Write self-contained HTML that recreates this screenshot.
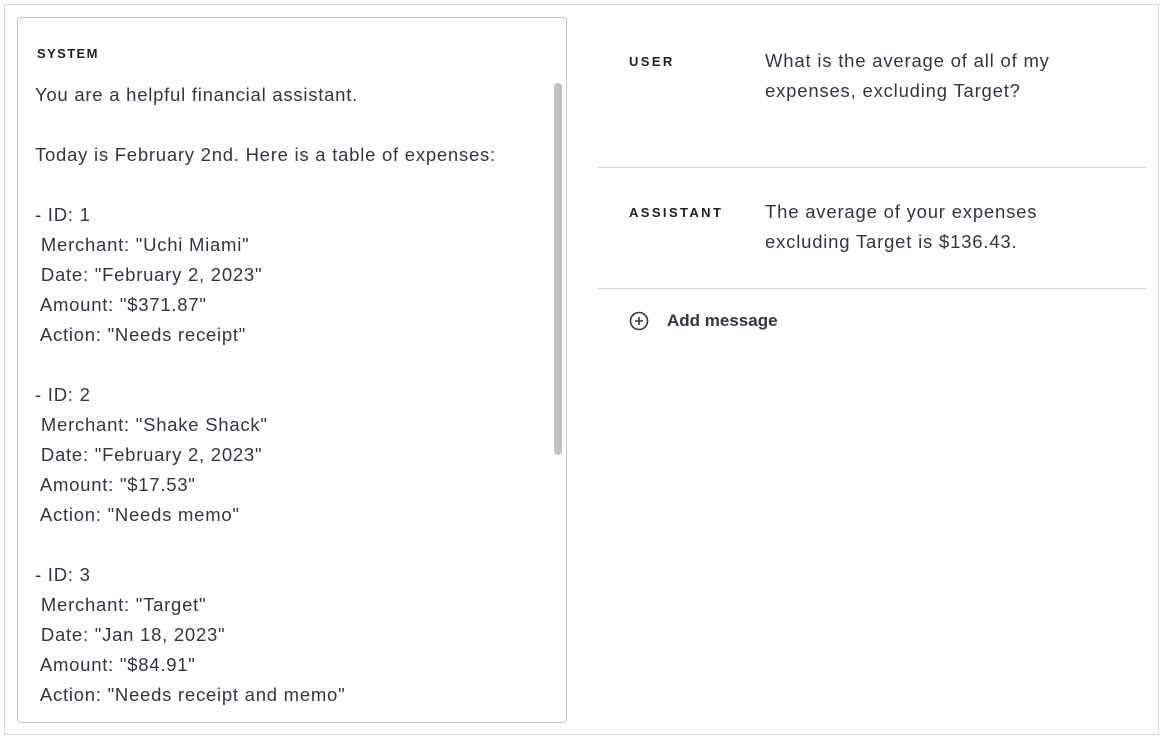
<!DOCTYPE html>
<html><head><style>
body{margin:0;width:1165px;height:741px;background:#fff;font-family:"Liberation Sans",sans-serif;color:#353740;position:relative;overflow:hidden}
.outer{position:absolute;left:4px;top:4px;width:1155px;height:731px;border:1px solid #d9d9e3;box-sizing:border-box}
.sys{position:absolute;left:17px;top:17px;width:550px;height:706px;border:1px solid #c5c5d2;border-radius:4px;box-sizing:border-box;overflow:hidden}
.lbl{font-size:13px;font-weight:bold;letter-spacing:2.4px;color:#202123}
.sys .lbl{position:absolute;left:19px;top:28px;letter-spacing:1.4px}
.txt{position:absolute;left:17px;top:62px;font-size:18.5px;letter-spacing:0.75px;line-height:30px;white-space:pre;color:#353740}
.sb{position:absolute;left:536px;top:65px;width:8px;height:372px;background:#c1c1c1;border-radius:4px}
.row{position:absolute;left:597px;width:550px}
.row .lbl{position:absolute;left:32px}
.row .t{position:absolute;left:168px;font-size:18.5px;letter-spacing:0.8px;line-height:30px;color:#353740;white-space:nowrap}
.hr{position:absolute;left:597px;width:550px;height:1px;background:#d9d9e3}
</style></head><body>
<div class="outer"></div>
<div class="sys"><div class="lbl">SYSTEM</div>
<div class="txt">You are a helpful financial assistant.

Today is February 2nd. Here is a table of expenses:

- ID: 1
 Merchant: "Uchi Miami"
 Date: "February 2, 2023"
 Amount: "$371.87"
 Action: "Needs receipt"

- ID: 2
 Merchant: "Shake Shack"
 Date: "February 2, 2023"
 Amount: "$17.53"
 Action: "Needs memo"

- ID: 3
 Merchant: "Target"
 Date: "Jan 18, 2023"
 Amount: "$84.91"
 Action: "Needs receipt and memo"</div>
<div class="sb"></div></div>
<div class="row" style="top:46px"><div class="lbl" style="top:8px">USER</div><div class="t">What is the average of all of my<br>expenses, excluding Target?</div></div>
<div class="hr" style="top:167px"></div>
<div class="row" style="top:197px"><div class="lbl" style="top:8px">ASSISTANT</div><div class="t">The average of your expenses<br>excluding Target is $136.43.</div></div>
<div class="hr" style="top:288px"></div>
<svg style="position:absolute;left:629px;top:311px" width="20" height="20" viewBox="0 0 20 20"><circle cx="10" cy="10" r="8.5" fill="none" stroke="#353740" stroke-width="1.6"/><path d="M10 6v8M6 10h8" stroke="#353740" stroke-width="1.6"/></svg>
<div style="position:absolute;left:667px;top:311px;font-size:17px;font-weight:bold;color:#353740">Add message</div>
</body></html>
